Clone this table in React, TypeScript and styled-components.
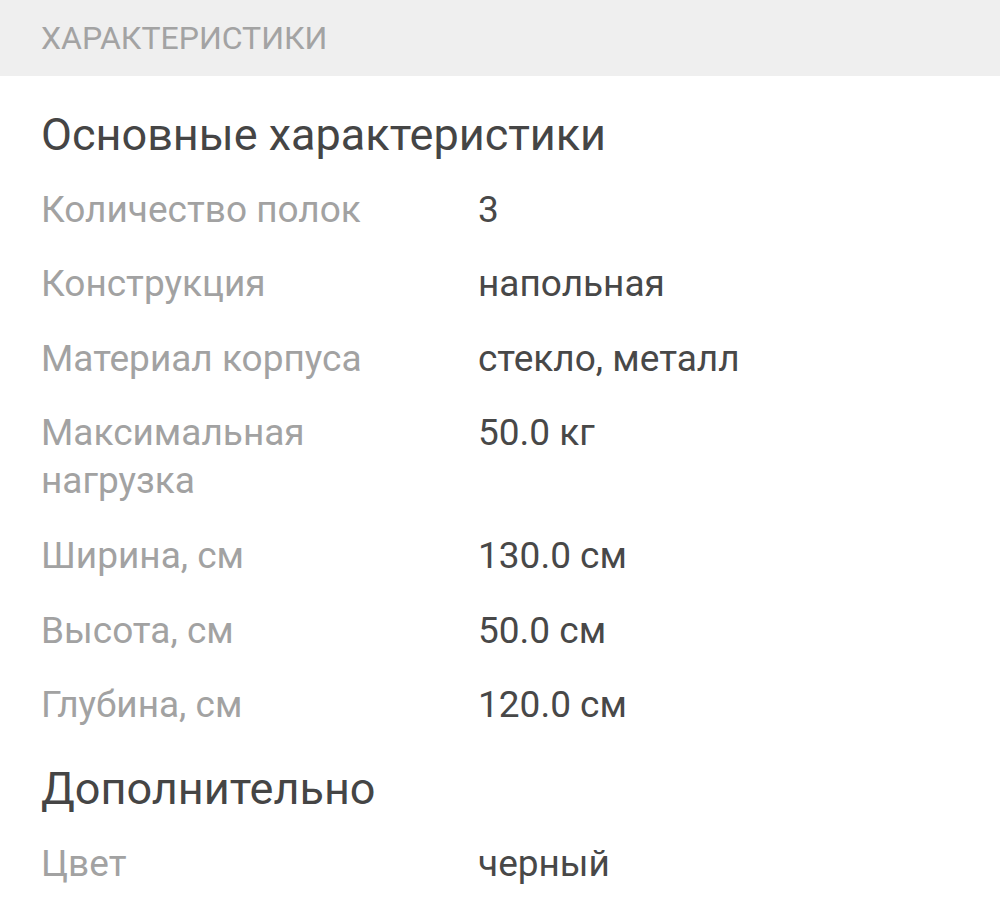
import React from "react";
import styled, { createGlobalStyle } from "styled-components";

const GlobalStyle = createGlobalStyle`
  html, body {
    margin: 0;
    padding: 0;
    background: #ffffff;
  }
  body {
    font-family: Roboto, "Noto Sans", sans-serif;
  }
`;

const Page = styled.div`
  width: 1000px;
  min-height: 904px;
  background: #ffffff;
`;

const SectionBar = styled.div`
  height: 76px;
  background: #efefef;
  display: flex;
  align-items: center;
  padding: 0 41px;
  box-sizing: border-box;
  color: #a3a3a3;
  font-size: 32px;
`;

const Body = styled.div`
  padding: 0 41px;
`;

const GroupTitle = styled.h2<{ $top: number }>`
  margin: ${(p) => p.$top}px 0 0;
  font-weight: 400;
  font-size: 45px;
  line-height: 48px;
  color: #454545;
`;

const Row = styled.div`
  display: grid;
  grid-template-columns: 437px 1fr;
  padding-top: 26.6px;
  font-size: 37px;
  line-height: 48px;
`;

const Label = styled.div`
  color: #a2a2a2;
  padding-right: 40px;
`;

const Value = styled.div`
  color: #484848;
`;

type Spec = { label: string; value: string };

const mainSpecs: Spec[] = [
  { label: "Количество полок", value: "3" },
  { label: "Конструкция", value: "напольная" },
  { label: "Материал корпуса", value: "стекло, металл" },
  { label: "Максимальная нагрузка", value: "50.0 кг" },
  { label: "Ширина, см", value: "130.0 см" },
  { label: "Высота, см", value: "50.0 см" },
  { label: "Глубина, см", value: "120.0 см" },
];

const extraSpecs: Spec[] = [{ label: "Цвет", value: "черный" }];

const App: React.FC = () => {
  return (
    <Page>
      <GlobalStyle />
      <SectionBar>ХАРАКТЕРИСТИКИ</SectionBar>
      <Body>
        <GroupTitle $top={35}>Основные характеристики</GroupTitle>
        {mainSpecs.map((s) => (
          <Row key={s.label}>
            <Label>{s.label}</Label>
            <Value>{s.value}</Value>
          </Row>
        ))}
        <GroupTitle $top={36}>Дополнительно</GroupTitle>
        {extraSpecs.map((s) => (
          <Row key={s.label}>
            <Label>{s.label}</Label>
            <Value>{s.value}</Value>
          </Row>
        ))}
      </Body>
    </Page>
  );
};

export default App;
